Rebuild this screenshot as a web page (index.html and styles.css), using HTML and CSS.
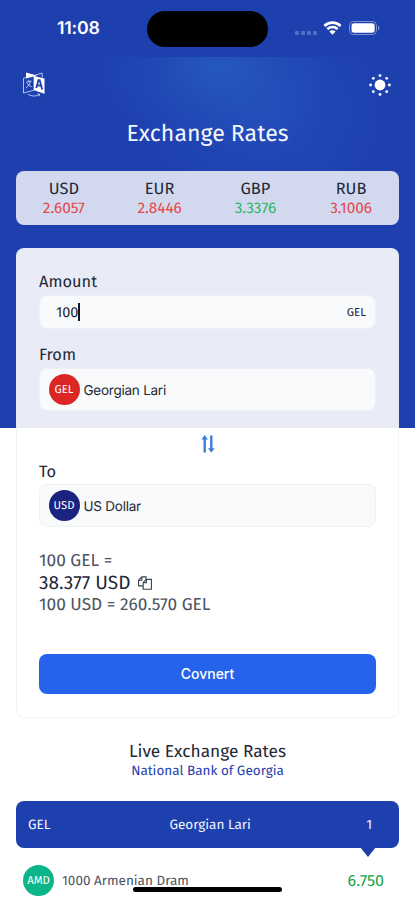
FILE: index.html
```html
<!DOCTYPE html>
<html lang="en">
<head>
<meta charset="utf-8">
<title>Exchange Rates</title>
<link rel="stylesheet" href="styles.css">
</head>
<body>
<div class="app">
  <div class="backdrop"></div>
  <div class="status">
    <span class="time">11:08</span>
    <div class="island"></div>
    <div class="signals">
      <svg width="22" height="4" viewBox="0 0 22 4" class="dots"><rect width="4" height="4" rx="1"/><rect x="6" width="4" height="4" rx="1"/><rect x="12" width="4" height="4" rx="1"/><rect x="18" width="4" height="4" rx="1"/></svg>
      <svg width="19" height="14" viewBox="0 0 19 14" class="wifi"><path d="M1.4 5A11.6 11.6 0 0 1 17.6 5M4.4 8.1a7.3 7.3 0 0 1 10.2 0"/><path class="solid" d="M9.5 13.7 6.4 10.6a4.4 4.4 0 0 1 6.2 0Z"/></svg>
      <svg width="31" height="14" viewBox="0 0 31 14" class="battery"><rect class="shell" x=".5" y=".5" width="27" height="13" rx="4"/><rect class="level" x="2.5" y="2.3" width="23.2" height="9.4" rx="2.6"/><path class="cap" d="M29 4.8q1.5.6 1.5 2.2T29 9.2Z"/></svg>
    </div>
  </div>
  <div class="tools">
    <svg width="22" height="26" viewBox="0 0 22 26" class="lang">
      <path class="solid" d="M3 .5 14 3.6 11 4.6 3 6.6Z"/>
      <path d="M.5 6.2 11 3.6V18.2L.5 21Z"/>
      <path d="M11.5 3.4 19.2 1V5.6"/>
      <path class="solid" d="M11 4 21.5 6.5V21.7L11 18.3Z"/>
      <path d="M3 10.3 8.5 9M5.4 7.9l.5 1.7M7.5 9.4Q6.3 14 2.8 16.2M4.3 11.3q1.5 3 4.2 3.4"/>
      <path class="letter" d="M13.3 15.9 15.4 8.2h1.3l2.5 9.3M14.3 13.1l3.9.8"/>
      <path d="M5 22.3q5.5 3.4 11.6.2M14.6 21.9l2.1.5-.6 1.7"/>
    </svg>
    <svg width="22" height="22" viewBox="0 0 22 22" class="sun"><circle cx="11" cy="11" r="5.4"/><circle cx="11" cy="1.6" r="1.4"/><circle cx="11" cy="20.4" r="1.4"/><circle cx="1.6" cy="11" r="1.4"/><circle cx="20.4" cy="11" r="1.4"/><circle cx="4.3" cy="4.3" r="1.4"/><circle cx="17.7" cy="4.3" r="1.4"/><circle cx="4.3" cy="17.7" r="1.4"/><circle cx="17.7" cy="17.7" r="1.4"/></svg>
  </div>
  <h1 class="title">Exchange Rates</h1>
  <div class="rates">
    <div><b>USD</b><span class="down">2.6057</span></div>
    <div><b>EUR</b><span class="down">2.8446</span></div>
    <div><b>GBP</b><span class="up">3.3376</span></div>
    <div><b>RUB</b><span class="down">3.1006</span></div>
  </div>
  <div class="card">
    <label class="label amount">Amount</label>
    <div class="field amount-field"><span class="value">100</span><i class="caret"></i><span class="unit">GEL</span></div>
    <label class="label from">From</label>
    <div class="field select"><span class="coin red">GEL</span><span class="name">Georgian Lari</span></div>
    <div class="swap"><svg width="14" height="18" viewBox="0 0 14 18"><path class="stem" d="M3.7 3v14.4M10.3.4V15"/><path d="M.4 4.6 3.7 0 7 4.6ZM7 13.2h6.6L10.3 17.8Z"/></svg></div>
    <label class="label to">To</label>
    <div class="field select"><span class="coin navy">USD</span><span class="name">US Dollar</span></div>
    <div class="result">
      <p>100 GEL =</p>
      <p class="total"><span>38.377 USD</span><svg width="14" height="14" viewBox="0 0 14 14"><path d="M5.2 9.9H.6V4.2L3.8.9H8V3.4M3.8.9V4.2H.6M5.2 6.7 8.4 3.4H13.4V13.2H5.2ZM8.4 3.4V6.7H5.2"/></svg></p>
      <p>100 USD = 260.570 GEL</p>
    </div>
    <button class="convert">Covnert</button>
  </div>
  <h2 class="live">Live Exchange Rates</h2>
  <p class="bank">National Bank of Georgia</p>
  <div class="base"><span>GEL</span><span class="mid">Georgian Lari</span><span class="one">1</span><i class="pointer"></i></div>
  <div class="row"><span class="coin green">AMD</span><span class="dram">1000 Armenian Dram</span><span class="price">6.750</span></div>
  <div class="home"></div>
</div>
</body>
</html>
```

FILE: styles.css
```css
* { box-sizing: border-box; margin: 0; padding: 0; }
body { font-family: "Fira Sans", "Noto Sans", sans-serif; font-variant-numeric: lining-nums; text-rendering: geometricPrecision; background: #fff; color: #1f2937; }
.app { position: relative; width: 415px; height: 900px; overflow: hidden; }
.backdrop { position: absolute; z-index: -1; top: 0; left: 0; width: 415px; height: 428px; padding-top: 57px; background: #1e40af; overflow: hidden; }
.backdrop::before { content: ""; display: block; width: 415px; height: 371px; background:
  radial-gradient(ellipse 120px 85px at 217px 10px, rgba(42,102,196,.6), rgba(40,92,192,.28) 50%, transparent),
  radial-gradient(ellipse 130px 110px at 265px 55px, rgba(40,90,195,.5), rgba(38,82,188,.22) 55%, transparent); }
.status { display: flex; height: 57px; position: relative; }
.time { font: 600 17.7px/22px Inter, sans-serif; color: #fff; margin: 18px 0 0 57px; letter-spacing: -.2px; width: 90px; }
.island { width: 121px; height: 36px; border-radius: 18px; background: #000; margin-top: 11px; }
.signals { display: flex; margin-left: 26.5px; }
.dots { fill: #526fc6; margin-top: 31px; }
.wifi { margin: 21px 0 0 6px; fill: none; stroke: #fff; stroke-width: 2.7; }
.wifi .solid { fill: #fff; stroke: none; }
.battery { margin: 21px 0 0 7px; }
.shell { fill: none; stroke: #7e93d0; }
.level { fill: #fff; }
.cap { fill: #7e93d0; }
.tools { display: flex; justify-content: space-between; height: 52px; padding: 15px 24px 0 23px; }
.lang { fill: none; stroke: #d5e0ff; stroke-width: .8; }
.lang .solid { fill: #fff; stroke: none; }
.lang .letter { stroke: #1e40af; stroke-width: 1.8; }
.sun { fill: #fff; margin-top: 2px; }
.title { height: 62px; text-align: center; font-size: 23.1px; line-height: 51px; font-weight: 400; color: #f3f6ff; }
.rates { margin: 0 16px; height: 54px; border-radius: 8px; background: rgba(255,255,255,.8); display: grid; grid-template-columns: repeat(4, 1fr); padding-top: 9px; }
.rates div { display: flex; flex-direction: column; align-items: center; }
.rates b { font-size: 16.4px; font-weight: 400; line-height: 20px; }
.rates span { font-size: 15.4px; line-height: 19px; }
.down { color: #e5484d; }
.up { color: #2fb862; }
.card { margin: 23px 16px 0; height: 470px; border: 1px solid rgba(228,231,238,.5); border-radius: 8px; background: rgba(255,255,255,.9); padding: 0 22px; }
.label { display: block; font-size: 16.4px; line-height: 22px; }
.amount { padding-top: 23px; height: 46px; }
.from { padding-top: 16px; height: 39px; }
.to { height: 24px; padding-top: 2px; }
.field { display: flex; align-items: center; background: #f9fafb; border: 1px solid #f0f1f5; border-radius: 8px; }
.amount-field { height: 34px; padding: 0 9px 0 16px; }
.value { font-size: 14.5px; }
.caret { width: 2px; height: 18px; background: #111827; }
.unit { margin-left: auto; padding-top: 1px; font-size: 11.5px; }
.select { height: 43px; padding-left: 8.5px; }
.coin { width: 31px; height: 31px; border-radius: 50%; color: #fff; font-size: 11.4px; line-height: 33px; text-align: center; flex: none; }
.red { background: #dc2626; }
.navy { background: #1a237e; }
.green { background: #0db58a; }
.name { margin-left: 4px; padding-top: 2px; font: 13.5px/20px Inter, sans-serif; letter-spacing: -.24px; }
.swap { height: 49px; display: flex; justify-content: center; padding-top: 24px; }
.swap svg { fill: #3b7fe0; }
.swap .stem { fill: none; stroke: #3b7fe0; stroke-width: 2.4; }
.result { padding-top: 23px; height: 127px; font-size: 17.3px; line-height: 22px; color: #4b5563; }
.total { display: flex; align-items: center; color: #1f2937; font-size: 19.1px; line-height: 23px; height: 22px; }
.total svg { margin-left: 8px; fill: none; stroke: #374151; stroke-width: 1.1; }
.convert { display: block; width: 100%; height: 40px; border: 0; border-radius: 8px; background: #2563eb; color: #fff; font: 500 14px/40px Inter, sans-serif; }
.live { padding-top: 24px; font-size: 17.3px; line-height: 20px; font-weight: 400; text-align: center; }
.bank { font-size: 13.5px; line-height: 17px; height: 18px; text-align: center; color: #1e40af; }
.base { position: relative; display: flex; margin: 21px 16px 0; height: 47px; border-radius: 8px; background: #1e40af; color: #f0f4ff; font-size: 13.5px; line-height: 47px; padding: 0 27px 0 12px; }
.mid { margin-left: 119px; }
.one { margin-left: auto; }
.pointer { position: absolute; left: 344px; top: 46px; border: 8px solid transparent; border-top: 10px solid #1e40af; border-bottom: 0; }
.row { display: flex; margin: 17px 16px 0; padding: 0 15px 0 7px; line-height: 31px; color: #4b5563; }
.dram { margin-left: 8px; font-size: 13.5px; }
.price { margin-left: auto; padding-top: 1px; font-size: 16.1px; color: #16a34a; }
.home { position: absolute; left: 133px; top: 887px; width: 149px; height: 5px; border-radius: 3px; background: #000; }
```
